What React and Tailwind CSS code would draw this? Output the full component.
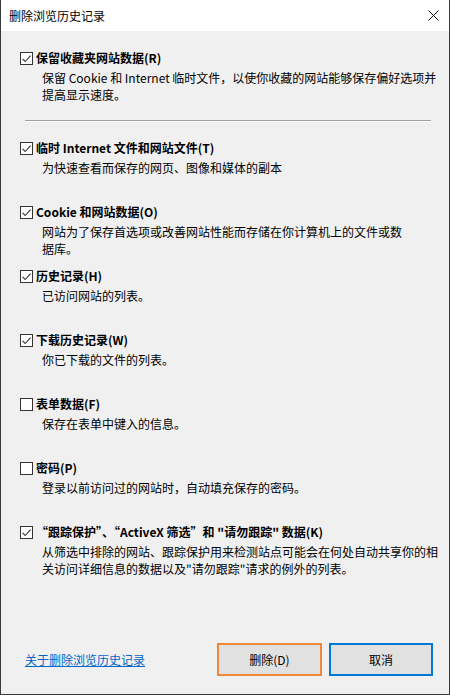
const font = { fontFamily: '"Noto Sans CJK SC", "Noto Sans", sans-serif' };

function CheckBox({ checked }) {
  return (
    <span className="flex h-[13px] w-[13px] shrink-0 items-center justify-center border border-[#333333] bg-white">
      {checked && (
        <svg width="11" height="11" viewBox="0 0 11 11" fill="none">
          <path d="M1.5 5.8 L4.2 8.5 L9.6 2.6" stroke="#333333" strokeWidth="1.1" />
        </svg>
      )}
    </span>
  );
}

function Item({ checked, label, lines, className = "" }) {
  return (
    <div className={className}>
      <div className="flex h-[16px] items-center">
        <span className="ml-[19px]">
          <CheckBox checked={checked} />
        </span>
        <span className="ml-[3px] whitespace-nowrap text-[12px] font-bold leading-[16px] text-black">{label}</span>
      </div>
      <div className="ml-[41px] mt-[3px] text-[12px] leading-[17px] text-black">
        {lines.map((l) => (
          <div key={l} className="whitespace-nowrap">
            {l}
          </div>
        ))}
      </div>
    </div>
  );
}

export default function App() {
  return (
    <div
      style={font}
      className="flex h-[695px] w-[450px] flex-col border-x border-b border-[#3a3a3a] bg-[#f0f0f0]"
    >
      <div className="flex h-[31px] shrink-0 items-center justify-between bg-white pl-[8px] pr-[8px]">
        <span className="text-[12px] leading-[16px] text-black">删除浏览历史记录</span>
        <svg width="11" height="11" viewBox="0 0 11 11" className="mr-[2px]">
          <path d="M0.5 0.5 L10.5 10.5 M10.5 0.5 L0.5 10.5" stroke="#111111" strokeWidth="1" />
        </svg>
      </div>

      <Item
        className="mt-[19px]"
        checked
        label="保留收藏夹网站数据(R)"
        lines={["保留 Cookie 和 Internet 临时文件，以使你收藏的网站能够保存偏好选项并", "提高显示速度。"]}
      />

      <div className="ml-[24px] mr-[18px] mt-[17px] border-t border-b border-t-[#a0a0a0] border-b-white" />

      <div className="mt-[18px] flex flex-col">
        <Item className="h-[64px]" checked label="临时 Internet 文件和网站文件(T)" lines={["为快速查看而保存的网页、图像和媒体的副本"]} />
        <Item
          className="h-[64px]"
          checked
          label="Cookie 和网站数据(O)"
          lines={["网站为了保存首选项或改善网站性能而存储在你计算机上的文件或数", "据库。"]}
        />
        <Item className="h-[64px]" checked label="历史记录(H)" lines={["已访问网站的列表。"]} />
        <Item className="h-[64px]" checked label="下载历史记录(W)" lines={["你已下载的文件的列表。"]} />
        <Item className="h-[64px]" label="表单数据(F)" lines={["保存在表单中键入的信息。"]} />
        <Item className="h-[64px]" label="密码(P)" lines={["登录以前访问过的网站时，自动填充保存的密码。"]} />
        <Item
          checked
          label="“跟踪保护”、“ActiveX 筛选”和 &quot;请勿跟踪&quot; 数据(K)"
          lines={["从筛选中排除的网站、跟踪保护用来检测站点可能会在何处自动共享你的相", "关访问详细信息的数据以及\"请勿跟踪\"请求的例外的列表。"]}
        />
      </div>

      <div className="flex-1" />

      <div className="mb-[18px] flex items-center pl-[24px] pr-[16px]">
        <a href="#" className="text-[12px] leading-[16px] text-[#0066cc] underline">
          关于删除浏览历史记录
        </a>
        <div className="flex-1" />
        <button className="h-[33px] w-[105px] border-2 border-[#f0883a] bg-[#e1e1e1] text-[12px] text-black">
          删除(D)
        </button>
        <button className="ml-[7px] h-[33px] w-[104px] border-2 border-[#0078d7] bg-[#e1e1e1] text-[12px] text-black">
          取消
        </button>
      </div>
    </div>
  );
}
